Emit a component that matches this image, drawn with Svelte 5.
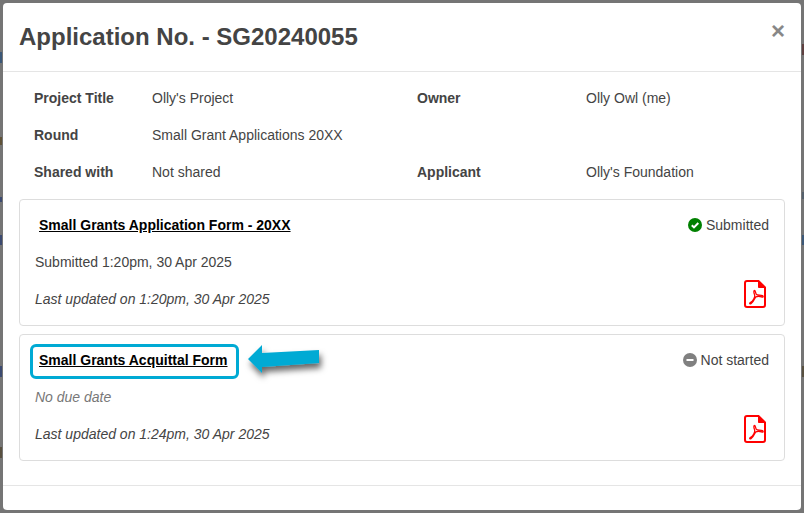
<script lang="ts">
  const details = [
    { label: 'Project Title', value: "Olly's Project" },
    { label: 'Owner', value: 'Olly Owl (me)' },
    { label: 'Round', value: 'Small Grant Applications 20XX' },
    { label: '', value: '' },
    { label: 'Shared with', value: 'Not shared' },
    { label: 'Applicant', value: "Olly's Foundation" }
  ];

  // bits of the dimmed page that stick out beside the modal
  const behind = [
    { side: 'left', top: 52, height: 11, color: '#3c5878' },
    { side: 'left', top: 137, height: 8, color: '#5f5238' },
    { side: 'left', top: 197, height: 5, color: '#3c4a70' },
    { side: 'left', top: 235, height: 10, color: '#3c4a70' },
    { side: 'left', top: 366, height: 11, color: '#3c4a70' },
    { side: 'left', top: 447, height: 11, color: '#585040' },
    { side: 'right', top: 44, height: 11, color: '#5f4040' },
    { side: 'right', top: 192, height: 7, color: '#55606c' },
    { side: 'right', top: 235, height: 10, color: '#3c5878' },
    { side: 'right', top: 366, height: 11, color: '#585040' }
  ];
</script>

{#snippet pdfIcon()}
  <svg class="pdf" width="22" height="28" viewBox="0 0 22 28" fill="none" stroke="#f00" aria-hidden="true">
    <path d="M3 1H14.500L21 7.500V25a2 2 0 0 1-2 2H3a2 2 0 0 1-2-2V3a2 2 0 0 1 2-2Z" stroke-width="2" />
    <path d="M14.500 1V7.500H21Z" fill="#f00" stroke-width="1" />
    <path d="M10.600 10.500c-1 0-1 1.600 0 4.200 1 2.400-2 6.600-4 7.600-1.600 .8-1 2.200 .4 1.400 2.400-1.400 4-5.600 4.600-6.600 .8-1 5-.8 6-.2 1.400 .8 2.200-.6 .8-1.200-2-.8-5.200-.4-6-1.400-.8-1-1-3.800-1.800-3.800Z" stroke-width="1.300" />
  </svg>
{/snippet}

{#each behind as b}
  <i class="scrap {b.side}" style="top:{b.top}px;height:{b.height}px;background:{b.color}"></i>
{/each}

<div class="modal">
  <header class="head">
    <h1>Application No. - SG20240055</h1>
    <span class="close">×</span>
  </header>

  <div class="body">
    <div class="details">
      {#each details as d}
        <b>{d.label}</b>
        <span>{d.value}</span>
      {/each}
    </div>

    <section class="card">
      <div class="top">
        <a class="form-link" href="#form">Small Grants Application Form - 20XX</a>
        <span class="status">
          <svg width="14" height="14" viewBox="0 0 14 14" aria-hidden="true">
            <circle cx="7" cy="7" r="7" fill="#008000" />
            <path d="M3.800 7.200 6 9.400 10.300 5" fill="none" stroke="#fff" stroke-width="2" />
          </svg>
          Submitted
        </span>
      </div>
      <p class="note">Submitted 1:20pm, 30 Apr 2025</p>
      <div class="bottom">
        <em>Last updated on 1:20pm, 30 Apr 2025</em>
        {@render pdfIcon()}
      </div>
    </section>

    <section class="card second">
      <div class="top">
        <div class="link-wrap">
          <a class="form-link boxed" href="#form">Small Grants Acquittal Form</a>
          <svg class="arrow" width="100" height="50" viewBox="0 0 100 50" aria-hidden="true">
            <defs>
              <filter id="shadow" x="-20%" y="-30%" width="150%" height="190%">
                <feDropShadow dx="2" dy="5" stdDeviation="3" flood-color="#000" flood-opacity="0.6" />
              </filter>
            </defs>
            <path d="M9 18 23 4V12L80 9V22L23 26V32Z" fill="#00aad4" filter="url(#shadow)" />
          </svg>
        </div>
        <span class="status">
          <svg width="14" height="14" viewBox="0 0 14 14" aria-hidden="true">
            <circle cx="7" cy="7" r="7" fill="#808080" />
            <rect x="3.500" y="6" width="7" height="2" fill="#fff" />
          </svg>
          Not started
        </span>
      </div>
      <p class="note due">No due date</p>
      <div class="bottom">
        <em>Last updated on 1:24pm, 30 Apr 2025</em>
        {@render pdfIcon()}
      </div>
    </section>
  </div>

  <footer class="foot"></footer>
</div>

<style>
  :global(body) {
    background: #757575;
    font-family: 'Liberation Sans', Arial, sans-serif;
    font-size: 14px;
    color: #444;
    overflow: hidden;
  }

  .scrap {
    position: absolute;
    width: 2px;
  }

  .scrap.left {
    left: 0;
  }

  .scrap.right {
    right: 0;
  }

  .modal {
    position: relative;
    box-sizing: border-box;
    width: 798px;
    height: 507px;
    margin: 3px;
    display: flex;
    flex-direction: column;
    background: #fff;
    border-radius: 4px;
  }

  .head {
    box-sizing: border-box;
    height: 69px;
    flex: none;
    display: flex;
    justify-content: space-between;
    padding: 20px 16px 0;
    border-bottom: 1px solid #e5e5e5;
  }

  h1 {
    margin: 0;
    font-size: 24px;
    line-height: 28px;
    font-weight: 700;
    color: #444;
  }

  .close {
    font-size: 24px;
    font-weight: 700;
    line-height: 15px;
    color: #888;
  }

  .body {
    flex: 1;
    padding: 0 16px;
  }

  .details {
    display: grid;
    grid-template-columns: 118px 265px 169px 1fr;
    grid-auto-rows: 37px;
    padding: 8px 0 0 15px;
    line-height: 37px;
    height: 127px;
    box-sizing: border-box;
  }

  .card {
    box-sizing: border-box;
    height: 127px;
    padding: 0 15px;
    border: 1px solid #ddd;
    border-radius: 4px;
  }

  .second {
    margin-top: 8px;
  }

  .top {
    height: 50px;
    display: flex;
    justify-content: space-between;
    align-items: center;
  }

  .form-link {
    font-weight: 700;
    color: #000;
    text-decoration: underline;
    padding-left: 4px;
  }

  .link-wrap {
    position: relative;
  }

  .boxed {
    display: block;
    box-sizing: border-box;
    width: 209px;
    margin: 2px 0 0 -5px;
    padding: 3px 0 5px 6px;
    line-height: 21px;
    border: 3px solid #00aad4;
    border-radius: 6px;
  }

  .arrow {
    position: absolute;
    left: 204px;
    top: -1px;
    overflow: visible;
  }

  .status {
    display: inline-flex;
    align-items: center;
    gap: 4px;
  }

  .note {
    margin: 0;
    line-height: 24px;
  }

  .due {
    color: #777;
    font-style: italic;
  }

  .bottom {
    display: flex;
    justify-content: space-between;
    align-items: center;
    margin-top: 12px;
    margin-right: 3px;
    height: 25px;
  }

  .pdf {
    flex: none;
    margin-top: -10px;
  }

  .foot {
    flex: none;
    height: 25px;
    box-sizing: border-box;
    border-top: 1px solid #e5e5e5;
  }
</style>
